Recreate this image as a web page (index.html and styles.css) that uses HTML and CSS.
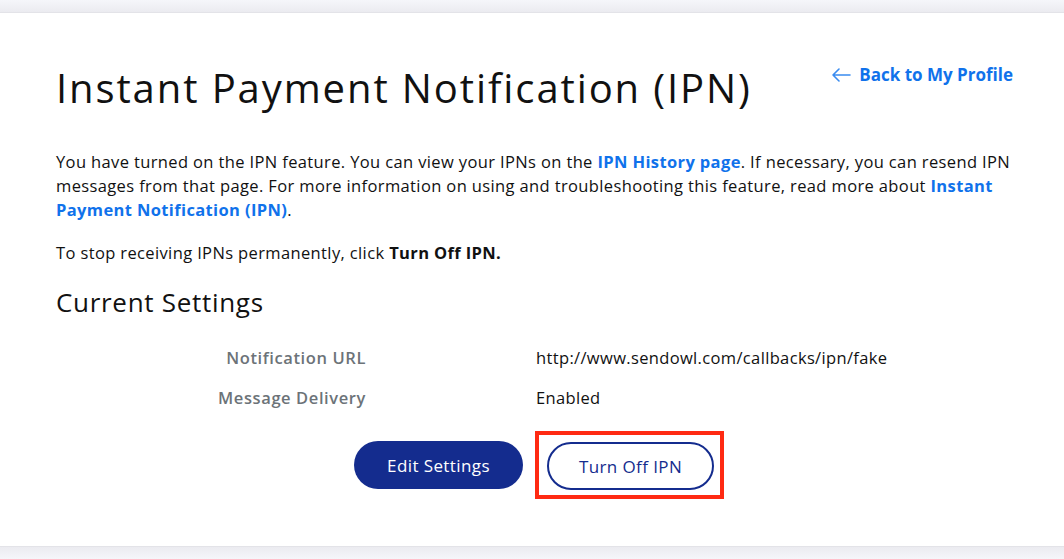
FILE: index.html
```html
<!DOCTYPE html>
<html>
<head>
<meta charset="utf-8">
<link rel="stylesheet" href="styles.css">
</head>
<body>
<div class="band"></div>
<main class="card">
  <header class="head">
    <h1 class="title">Instant Payment Notification (IPN)</h1>
    <a class="back" href="#"><svg class="arrow" width="20" height="14" viewBox="0 0 20 14"><path d="M19 7H2M8 1L2 7l6 6" fill="none" stroke="#3a8cf0" stroke-width="1.6" stroke-linecap="round" stroke-linejoin="round"/></svg>Back to My Profile</a>
  </header>
  <p class="text">You have turned on the IPN feature. You can view your IPNs on the <a class="link" href="#">IPN History page</a>. If necessary, you can resend IPN messages from that page. For more information on using and troubleshooting this feature, read more about <a class="link" href="#">Instant Payment Notification (IPN)</a>.</p>
  <p class="text stop">To stop receiving IPNs permanently, click <b>Turn Off IPN.</b></p>
  <h2 class="sub">Current Settings</h2>
  <div class="settings">
    <div class="label">Notification URL</div>
    <div class="value">http://www.sendowl.com/callbacks/ipn/fake</div>
    <div class="label">Message Delivery</div>
    <div class="value">Enabled</div>
  </div>
  <div class="actions">
    <button class="btn primary">Edit Settings</button>
    <div class="highlight"><button class="btn secondary">Turn Off IPN</button></div>
  </div>
</main>
<div class="band bottom"></div>
</body>
</html>
```
FILE: styles.css
```css
html, body {
  margin: 0;
  padding: 0;
  background: #f5f6fa;
  font-family: "Open Sans", "Noto Sans", sans-serif;
  color: #111;
}
.band {
  height: 13px;
  background: linear-gradient(#f5f6fa, #ebebf0);
  border-bottom: 1px solid #e3e3e8;
  box-sizing: border-box;
}
.band.bottom {
  background: linear-gradient(#ebebf0, #f5f6fa);
  border-bottom: 0;
  border-top: 1px solid #e3e3e8;
}
.card {
  background: #fff;
  height: 533px;
  box-sizing: border-box;
  padding: 0 51px 0 56px;
  overflow: hidden;
}
.head {
  display: flex;
  justify-content: space-between;
  align-items: flex-start;
  padding-top: 51px;
}
.title {
  margin: 0;
  font-size: 40px;
  font-weight: 400;
  line-height: 48px;
  letter-spacing: 1.9px;
}
.back {
  display: flex;
  align-items: center;
  gap: 8px;
  margin-top: -1px;
  color: #1072eb;
  font-weight: 700;
  font-size: 17px;
  text-decoration: none;
  line-height: 24px;
}
.arrow { display: block; }
.text {
  margin: 38px 0 0;
  font-size: 16.5px;
  line-height: 24px;
  letter-spacing: 0.37px;
  color: #111;
}
.text.stop { margin-top: 19px; }
.link {
  color: #1072eb;
  font-weight: 700;
  text-decoration: none;
}
.sub {
  margin: 21px 0 0;
  font-size: 26px;
  font-weight: 400;
  line-height: 32px;
  letter-spacing: 0.7px;
}
.settings {
  display: grid;
  grid-template-columns: 310px auto;
  column-gap: 170px;
  row-gap: 16px;
  margin-top: 28px;
  font-size: 16.5px;
  line-height: 24px;
  letter-spacing: 0.35px;
}
.label {
  text-align: right;
  color: #6c7378;
  font-weight: 600;
  letter-spacing: 0.6px;
}
.value { color: #111; }
.actions {
  display: flex;
  justify-content: center;
  align-items: center;
  gap: 12px;
  margin-top: 21px;
  padding-left: 9px;
}
.btn {
  height: 48px;
  border-radius: 24px;
  font-family: inherit;
  font-size: 17px;
  letter-spacing: 0.4px;
  box-sizing: border-box;
  cursor: pointer;
}
.primary {
  width: 169px;
  background: #142c8e;
  color: #fff;
  border: 0;
}
.highlight {
  border: 4px solid #ff2a12;
  padding: 7px 6px 5px 8px;
}
.secondary {
  width: 167px;
  background: #fff;
  color: #142c8e;
  border: 2px solid #142c8e;
  display: block;
}
```
